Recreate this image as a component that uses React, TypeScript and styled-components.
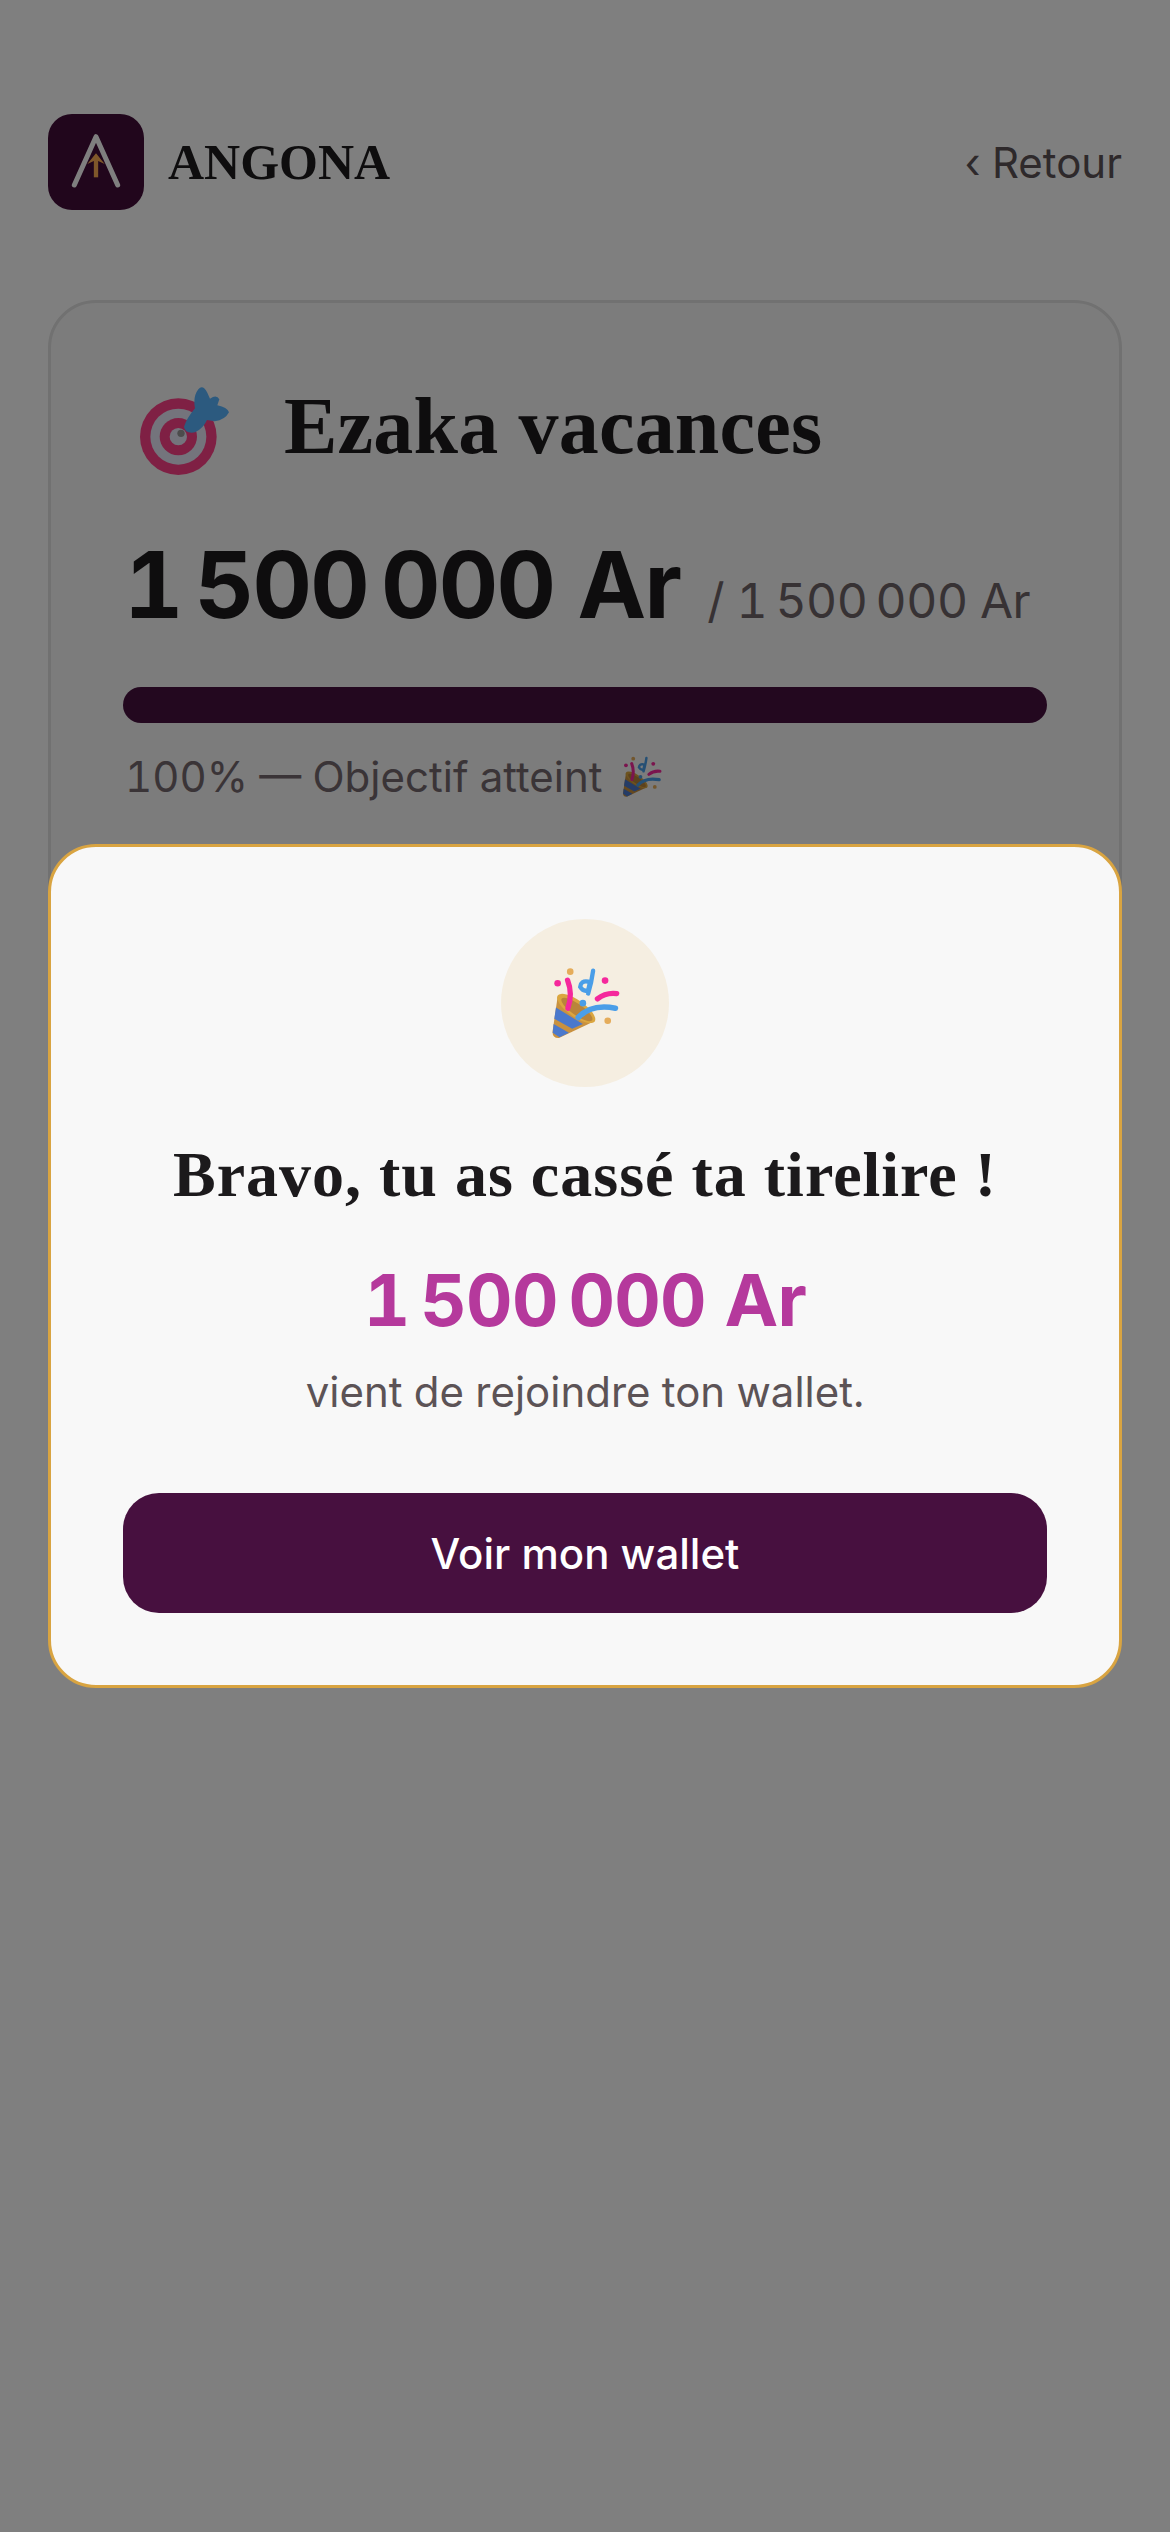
import React from "react"
import styled, { createGlobalStyle } from "styled-components"

const GlobalStyle = createGlobalStyle`
  html, body {
    margin: 0;
    padding: 0;
    background: #ffffff;
  }
  body {
    font-family: Inter, "Liberation Sans", sans-serif;
    font-variant-numeric: tabular-nums;
  }
`

const Page = styled.div`
  box-sizing: border-box;
  height: 2532px;
  padding: 114px 48px 0;
  background: #ffffff;
`

const Header = styled.header`
  display: flex;
  align-items: center;
  justify-content: space-between;
  height: 96px;
  margin-bottom: 90px;
`

const Brand = styled.div`
  display: flex;
  align-items: center;
  gap: 24px;
`

const LogoTile = styled.svg`
  display: block;
  width: 96px;
  height: 96px;
`

const BrandName = styled.span`
  font-family: "Liberation Serif", serif;
  font-weight: 700;
  font-size: 50px;
  color: #1c1a1c;
`

const BackLink = styled.span`
  font-size: 42px;
  color: #5c5356;
`

const GoalCard = styled.section`
  box-sizing: border-box;
  height: 1000px;
  padding: 72px;
  border: 3px solid #e2e2e2;
  border-radius: 48px;
  background: #f8f8f8;
`

const GoalTitleRow = styled.div`
  display: flex;
  align-items: flex-start;
  gap: 54px;
  height: 100px;
  padding-left: 17px;
`

const GoalIcon = styled.svg`
  display: block;
  width: 90px;
  height: 90px;
  margin-top: 11px;
`

const GoalTitle = styled.h1`
  margin: 1px 0 0;
  font-family: "Liberation Serif", serif;
  font-weight: 700;
  font-size: 80px;
  line-height: 100px;
  letter-spacing: 0.2px;
  color: #1c1a1c;
`

const Amounts = styled.div`
  display: flex;
  align-items: baseline;
  gap: 27px;
  height: 110px;
  margin-top: 55px;
  padding-left: 1px;
  white-space: nowrap;
`

const SavedAmount = styled.span`
  font-weight: 700;
  font-size: 92px;
  line-height: 110px;
  letter-spacing: -0.018em;
  color: #1c1a1c;
`

const TargetAmount = styled.span`
  font-size: 48px;
  letter-spacing: -0.01em;
  color: #6f6468;
`

const Progress = styled.div`
  height: 36px;
  margin-top: 47px;
  border-radius: 18px;
  background: #47103f;
`

const Status = styled.div`
  display: flex;
  align-items: center;
  gap: 18px;
  margin-top: 24px;
  padding-left: 2px;
  font-size: 42px;
  line-height: 60px;
  color: #75696f;
`

const Overlay = styled.div`
  position: fixed;
  inset: 0;
  display: flex;
  align-items: center;
  justify-content: center;
  padding: 0 48px;
  background: rgba(0, 0, 0, 0.5);
`

const Modal = styled.div`
  box-sizing: border-box;
  width: 100%;
  display: flex;
  flex-direction: column;
  align-items: center;
  padding: 72px;
  border: 3px solid #d9a441;
  border-radius: 48px;
  background: #f8f8f8;
`

const EmojiCircle = styled.div`
  width: 168px;
  height: 168px;
  display: flex;
  align-items: center;
  justify-content: center;
  border-radius: 50%;
  background: #f5eee1;
`

const ModalTitle = styled.h2`
  margin: 48px 0 0;
  font-family: "Liberation Serif", serif;
  font-weight: 700;
  font-size: 64px;
  line-height: 80px;
  letter-spacing: 1px;
  color: #1c1a1c;
`

const ModalAmount = styled.div`
  margin-top: 40px;
  font-weight: 700;
  font-size: 72px;
  line-height: 90px;
  letter-spacing: -0.01em;
  white-space: nowrap;
  color: #b5399c;
`

const ModalText = styled.p`
  margin: 17px 0 0;
  font-size: 42px;
  line-height: 60px;
  color: #5c5356;
`

const PrimaryButton = styled.button`
  width: 100%;
  height: 120px;
  margin-top: 71px;
  border: none;
  border-radius: 36px;
  background: #47103f;
  color: #ffffff;
  font-family: Inter, sans-serif;
  font-weight: 500;
  font-size: 42px;
`

const Logo = () => (
  <LogoTile viewBox="54 72 288 288">
    <rect x="54" y="72" width="288" height="288" rx="72" fill="#420c38" />
    <path d="M133 285 L198 140 L263 285" fill="none" stroke="#ffffff" strokeWidth="15" strokeLinecap="round" strokeLinejoin="round" />
    <path d="M198 262 L198 200" fill="none" stroke="#ffae55" strokeWidth="13" />
    <path d="M198 190 L224 222 L198 210 L172 222 Z" fill="#ffae55" />
  </LogoTile>
)

const Popper = ({ size }: { size: number }) => (
  <svg width={size} height={size} viewBox="238 192 212 220">
    <path d="M260 282 L245 385 Q243 407 264 406 L372 355 Z" fill="#c9913f" />
    <path d="M255 314 L336 364 L304 378 L250 348 Z" fill="#4a78cc" />
    <path d="M248 364 L294 390 L266 404 L245 390 Z" fill="#4a78cc" />
    <ellipse cx="316" cy="317" rx="68" ry="25" transform="rotate(35 316 317)" fill="#dba63f" />
    <ellipse cx="318" cy="320" rx="56" ry="17" transform="rotate(35 318 320)" fill="#b9843a" />
    <path d="M290 232 Q306 272 291 316" fill="none" stroke="#f5289c" strokeWidth="16" strokeLinecap="round" />
    <path d="M380 288 Q405 268 438 272" fill="none" stroke="#f5289c" strokeWidth="16" strokeLinecap="round" />
    <path d="M367 203 Q362 240 352 272 M352 236 Q330 232 328 252 Q338 268 352 262 L358 236" fill="none" stroke="#4a9ee8" strokeWidth="13" strokeLinecap="round" />
    <path d="M322 344 Q362 302 434 316" fill="none" stroke="#4a9ee8" strokeWidth="17" strokeLinecap="round" />
    <circle cx="260" cy="241" r="10" fill="#f5289c" />
    <circle cx="403" cy="233" r="10" fill="#f5289c" />
    <circle cx="298" cy="206" r="10" fill="#e5ac5a" />
    <circle cx="411" cy="354" r="10" fill="#e5ac5a" />
    <circle cx="336" cy="301" r="10" fill="#4a9ee8" />
  </svg>
)

const Dart = () => (
  <GoalIcon viewBox="90 78 270 270">
    <circle cx="205" cy="230" r="115" fill="#ff4088" />
    <circle cx="205" cy="230" r="84" fill="#e8e8f8" />
    <circle cx="205" cy="230" r="56" fill="#ff4088" />
    <circle cx="205" cy="230" r="26" fill="#e8e8f8" />
    <circle cx="213" cy="220" r="11" fill="#999999" />
    <path d="M222 200 Q230 175 255 145 Q248 110 265 88 Q278 72 292 98 L300 116 Q320 102 328 118 L322 136 Q352 142 357 157 Q345 180 314 184 L291 180 Q280 205 255 217 Q225 222 222 200 Z" fill="#58b4ff" />
  </GoalIcon>
)

const App = () => {
  return (
    <>
      <GlobalStyle />
      <Page>
        <Header>
          <Brand>
            <Logo />
            <BrandName>ANGONA</BrandName>
          </Brand>
          <BackLink>‹ Retour</BackLink>
        </Header>
        <GoalCard>
          <GoalTitleRow>
            <Dart />
            <GoalTitle>Ezaka vacances</GoalTitle>
          </GoalTitleRow>
          <Amounts>
            <SavedAmount>1{"\u202f"}500{"\u202f"}000 Ar</SavedAmount>
            <TargetAmount>/ 1{"\u202f"}500{"\u202f"}000 Ar</TargetAmount>
          </Amounts>
          <Progress />
          <Status>
            100% — Objectif atteint <Popper size={42} />
          </Status>
        </GoalCard>
      </Page>
      <Overlay>
        <Modal>
          <EmojiCircle>
            <Popper size={73} />
          </EmojiCircle>
          <ModalTitle>Bravo, tu as cassé ta tirelire !</ModalTitle>
          <ModalAmount>1{"\u202f"}500{"\u202f"}000 Ar</ModalAmount>
          <ModalText>vient de rejoindre ton wallet.</ModalText>
          <PrimaryButton>Voir mon wallet</PrimaryButton>
        </Modal>
      </Overlay>
    </>
  )
}

export default App
